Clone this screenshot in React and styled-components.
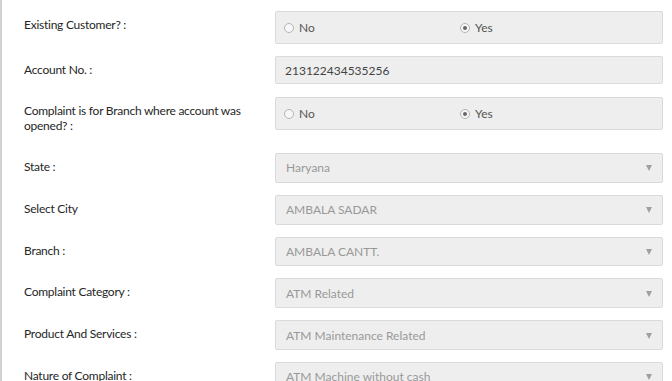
import React from 'react';
import styled, { createGlobalStyle } from 'styled-components';

const GlobalStyle = createGlobalStyle`
  html, body {
    margin: 0;
    padding: 0;
    background: #fff;
  }
  body {
    font-family: Lato, "Liberation Sans", Arial, sans-serif;
    font-size: 12px;
    color: #333;
  }
`;

const Form = styled.div`
  border-left: 2px solid #d2d2d2;
  padding: 11px 9px 0 22px;
  min-height: 381px;
  box-sizing: border-box;
`;

const Row = styled.div`
  display: grid;
  grid-template-columns: 251px 1fr;
  align-items: start;
  margin-bottom: 12px;
`;

const Label = styled.div`
  padding: 6px 14px 8px 0;
  line-height: 15px;
  letter-spacing: -0.25px;
  color: #262626;
`;

const Box = styled.div`
  box-sizing: border-box;
  height: ${p => p.$h || 29.8}px;
  background: #eeeeee;
  border: 1px solid #dadada;
  border-radius: 2px;
  display: flex;
  align-items: center;
  padding: 0 10px;
`;

const RadioGroup = styled(Box)`
  display: grid;
  grid-template-columns: 176px 1fr;
  padding-left: 8px;
`;

const RadioOption = styled.label`
  display: flex;
  align-items: center;
  gap: 5px;
  color: #555;
  line-height: 15px;
`;

const Dot = styled.span`
  width: 10px;
  height: 10px;
  box-sizing: border-box;
  border-radius: 50%;
  border: 1px solid #b4b4b4;
  background: #f7f7f7;
  display: inline-flex;
  align-items: center;
  justify-content: center;
  &::after {
    content: '';
    width: 4px;
    height: 4px;
    border-radius: 50%;
    background: ${p => (p.$on ? '#666' : 'transparent')};
  }
`;

const TextInput = styled.input`
  box-sizing: border-box;
  width: 100%;
  height: 28px;
  background: #eeeeee;
  border: 1px solid #dadada;
  border-radius: 2px;
  padding: 0 9px;
  font: inherit;
  color: #444;
  outline: none;
`;

const SelectBox = styled(Box)`
  justify-content: space-between;
  color: #999;
`;

const Caret = styled.span`
  width: 0;
  height: 0;
  border-left: 3px solid transparent;
  border-right: 3px solid transparent;
  border-top: 6px solid #a0a0a0;
  margin-top: 1px;
`;

const Radio = ({ options, value }) => (
  <RadioGroup $h={33}>
    {options.map(o => (
      <RadioOption key={o}>
        <Dot $on={o === value} />
        {o}
      </RadioOption>
    ))}
  </RadioGroup>
);

const Select = ({ value }) => (
  <SelectBox>
    <span>{value}</span>
    <Caret />
  </SelectBox>
);

const selects = [
  ['State :', 'Haryana'],
  ['Select City', 'AMBALA SADAR'],
  ['Branch :', 'AMBALA CANTT.'],
  ['Complaint Category :', 'ATM Related'],
  ['Product And Services :', 'ATM Maintenance Related'],
  ['Nature of Complaint :', 'ATM Machine without cash']
];

export default function App() {
  return (
    <>
      <GlobalStyle />
      <Form>
        <Row>
          <Label>Existing Customer? :</Label>
          <Radio options={['No', 'Yes']} value="Yes" />
        </Row>
        <Row>
          <Label>Account No. :</Label>
          <TextInput readOnly value="213122434535256" />
        </Row>
        <Row>
          <Label>Complaint is for Branch where account was opened? :</Label>
          <Radio options={['No', 'Yes']} value="Yes" />
        </Row>
        {selects.map(([label, value]) => (
          <Row key={label}>
            <Label>{label}</Label>
            <Select value={value} />
          </Row>
        ))}
      </Form>
    </>
  );
}
